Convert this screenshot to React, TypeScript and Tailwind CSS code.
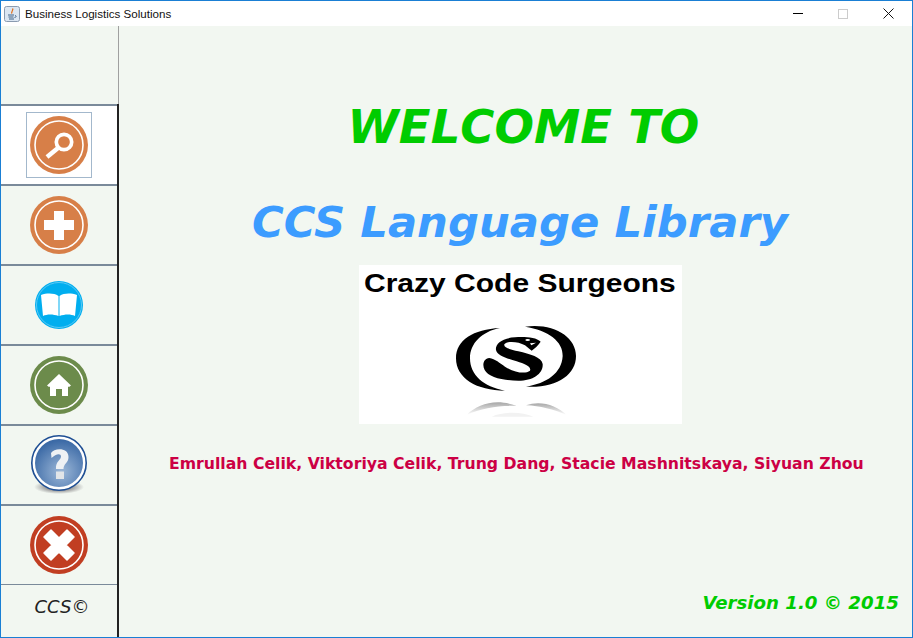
const sans = "font-['Liberation_Sans',Arial,sans-serif]";
const comic = "font-['DejaVu_Sans',sans-serif] font-bold";

function RingIcon({ color, children }: { color: string; children: React.ReactNode }) {
  return (
    <svg width="58" height="58" viewBox="0 0 58 58">
      <circle cx="29" cy="29" r="29" fill={color} />
      <circle cx="29" cy="29" r="24" fill="none" stroke="#fff" strokeWidth="1.6" />
      {children}
    </svg>
  );
}

function SearchIcon() {
  return (
    <RingIcon color="#d77f48">
      <circle cx="34" cy="26" r="7.7" fill="none" stroke="#fff" strokeWidth="3.7" />
      <path d="M28 32 L17 41" stroke="#fff" strokeWidth="4.5" />
    </RingIcon>
  );
}

function PlusIcon() {
  return (
    <RingIcon color="#d77f48">
      <path d="M24 15h10v9h10v10H34v10H24V34H14V24h10z" fill="#fff" />
    </RingIcon>
  );
}

function BookIcon() {
  return (
    <svg width="48" height="48" viewBox="0 0 48 48">
      <circle cx="24" cy="24" r="24" fill="#00aeef" />
      <circle cx="24" cy="24" r="22.5" fill="none" stroke="#5cc9f5" strokeWidth="1" />
      <path d="M6 14 C12 12 19 12 23.5 15 V35 C18 33 12 33 8 35 Z" fill="#fff" />
      <path d="M42 14 C36 12 29 12 24.5 15 V35 C30 33 36 33 40 35 Z" fill="#fff" />
    </svg>
  );
}

function HomeIcon() {
  return (
    <RingIcon color="#6c8b4b">
      <path d="M29 18 L41 29.5 L39 31 L38 30.5 V40 H32 V33 H26 V40 H20 V30.5 L19 31 L17 29.5 Z" fill="#fff" />
    </RingIcon>
  );
}

function HelpIcon() {
  return (
    <svg width="58" height="60" viewBox="0 0 58 60">
      <defs>
        <radialGradient id="helpFill" cx="0.55" cy="0.68" r="0.65">
          <stop offset="0" stopColor="#9db8d8" />
          <stop offset="1" stopColor="#3c6aa6" />
        </radialGradient>
        <radialGradient id="helpShadow">
          <stop offset="0.5" stopColor="#999" />
          <stop offset="1" stopColor="#999" stopOpacity="0" />
        </radialGradient>
      </defs>
      <ellipse cx="29" cy="52" rx="25" ry="7" fill="url(#helpShadow)" />
      <circle cx="29" cy="28" r="27.2" fill="#fff" stroke="#1f4f94" strokeWidth="1.6" />
      <circle cx="29" cy="28" r="24" fill="url(#helpFill)" />
      <path d="M21 18 C24 13 38.5 12 38.5 22 C38.5 28 33.5 28.5 33.5 34 H26 C25.5 26 31 25.5 31 21.5 C31 18 26 18.5 21.5 23 Z" fill="#eef1f4" />
      <rect x="26" y="36.5" width="8" height="7.5" fill="#e2e5e8" />
    </svg>
  );
}

function CloseIcon() {
  return (
    <RingIcon color="#c13e22">
      <path d="M21 14 L29 22 L37 14 L44 21 L36 29 L44 37 L37 44 L29 36 L21 44 L14 37 L22 29 L14 21 Z" fill="#fff" strokeLinejoin="round" stroke="#fff" strokeWidth="1.5" />
    </RingIcon>
  );
}

function JavaIcon() {
  return (
    <svg width="16" height="16" viewBox="0 0 16 16">
      <rect x="0.5" y="0.5" width="15" height="15" rx="2" fill="#dbe6f2" stroke="#8a9bb0" />
      <path d="M8.5 2.5 C10 4.5 6.5 5.5 8 7.5" fill="none" stroke="#e2711d" strokeWidth="1.3" />
      <path d="M4 9h6M4.5 11h5M5 13h5M11 9.5c1.5 0 1.5 2-.5 2" fill="none" stroke="#3f6288" strokeWidth="1" />
    </svg>
  );
}

function SnakeLogo() {
  return (
    <svg className="mt-[21px] -ml-[6px]" width="135" height="102" viewBox="0 0 405 306">
      <defs>
        <linearGradient id="reflection" x1="0" y1="0" x2="0" y2="1">
          <stop offset="0" stopColor="#a8a8a8" />
          <stop offset="1" stopColor="#fff" />
        </linearGradient>
      </defs>
      <path d="M150 24 C70 28 18 60 18 115 C18 175 80 212 165 212 C100 200 60 165 60 115 C60 70 95 35 150 24Z" fill="#000" />
      <path d="M225 20 C310 8 378 50 378 108 C378 165 320 205 228 200 C290 190 335 160 338 108 C340 65 295 30 225 20Z" fill="#000" />
      <path
        d="M272 65 C258 52 225 50 195 52 C155 54 135 72 138 90 C141 108 175 116 200 124 C225 132 245 140 240 152 C225 164 190 156 165 140 C150 130 135 116 118 114 C100 116 96 135 104 150 C115 172 160 182 205 182 C250 182 280 160 278 132 C275 112 240 102 205 94 C182 88 160 84 163 73 C170 62 205 64 225 76 L245 92 C255 85 265 75 272 65 Z"
        fill="#000"
      />
      <ellipse cx="233" cy="60" rx="7" ry="3" fill="#fff" />
      <path d="M240 70 L258 68 L244 76 Z" fill="#fff" />
      <path d="M50 285 C85 250 140 235 200 258 C150 255 95 265 50 285 Z" fill="url(#reflection)" />
      <path d="M228 256 C270 240 320 255 350 285 C310 268 270 258 228 256 Z" fill="url(#reflection)" />
      <path d="M125 290 C160 274 215 274 250 290 Z" fill="#f2f2f2" />
    </svg>
  );
}

function NavButton({ active, children }: { active?: boolean; children: React.ReactNode }) {
  return (
    <div className={`flex h-[80px] items-center justify-center border-t-2 border-[#7a8a9a] ${active ? "bg-white" : ""}`}>
      {children}
    </div>
  );
}

export default function App() {
  return (
    <div className={`flex h-[638px] w-[913px] flex-col overflow-hidden border border-[#1a7fd4] bg-[#f2f7f1] ${sans}`}>
      <header className="flex h-[25px] shrink-0 items-center bg-white">
        <div className="ml-[3px]">
          <JavaIcon />
        </div>
        <span className="ml-[5px] text-[11.6px] text-[#111]">Business Logistics Solutions</span>
        <div className="ml-auto flex items-center">
          <div className="h-px w-[10px] bg-black" />
          <div className="ml-[35px] h-[10px] w-[10px] border border-[#ccc]" />
          <svg className="ml-[35px] mr-[18px]" width="11" height="11" viewBox="0 0 11 11">
            <path d="M0.5 0.5 L10.5 10.5 M10.5 0.5 L0.5 10.5" stroke="#111" strokeWidth="1" />
          </svg>
        </div>
      </header>

      <div className="flex min-h-0 flex-1">
        <aside className="flex w-[118px] shrink-0 flex-col">
          <div className="h-[78px] border-r border-[#a0a0a0]" />
          <div className="flex flex-1 flex-col border-r-2 border-[#222]">
            <NavButton active>
              <div className="flex h-[66px] w-[66px] items-center justify-center border border-[#a3b8cc]">
                <SearchIcon />
              </div>
            </NavButton>
            <NavButton>
              <PlusIcon />
            </NavButton>
            <NavButton>
              <BookIcon />
            </NavButton>
            <NavButton>
              <HomeIcon />
            </NavButton>
            <NavButton>
              <HelpIcon />
            </NavButton>
            <NavButton>
              <CloseIcon />
            </NavButton>
            <div className="flex flex-1 items-start justify-center border-t border-[#7a8a9a]">
              <span className="mt-[10px] ml-[6px] font-['DejaVu_Sans',sans-serif] text-[18px] leading-[24px] italic text-[#222]">CCS©</span>
            </div>
          </div>
        </aside>

        <main className="flex min-w-0 flex-1 flex-col items-center pl-[9px]">
          <h1 className={`mt-[66px] ml-[7px] text-[46.5px] leading-[70px] italic text-[#00cc00] ${comic}`}>WELCOME TO</h1>
          <h2 className={`mt-[25px] text-[43.3px] leading-[70px] italic text-[#3c9cff] ${comic}`}>CCS Language Library</h2>
          <div className="mt-[8px] flex h-[159px] w-[323px] flex-col items-center bg-white">
            <span className="mt-[2px] scale-x-[1.2] text-[25px] font-bold leading-[32px] text-black">Crazy Code Surgeons</span>
            <SnakeLogo />
          </div>
          <p className={`mt-[28px] w-full pl-[41px] text-[15.7px] leading-[24px] whitespace-nowrap text-[#cc0044] ${comic}`}>
            Emrullah Celik, Viktoriya Celik, Trung Dang, Stacie Mashnitskaya, Siyuan Zhou
          </p>
          <p className={`mt-auto mb-[22px] mr-[13px] self-end text-[18.2px] leading-[24px] italic text-[#00cc00] ${comic}`}>
            Version 1.0 © 2015
          </p>
        </main>
      </div>
    </div>
  );
}
